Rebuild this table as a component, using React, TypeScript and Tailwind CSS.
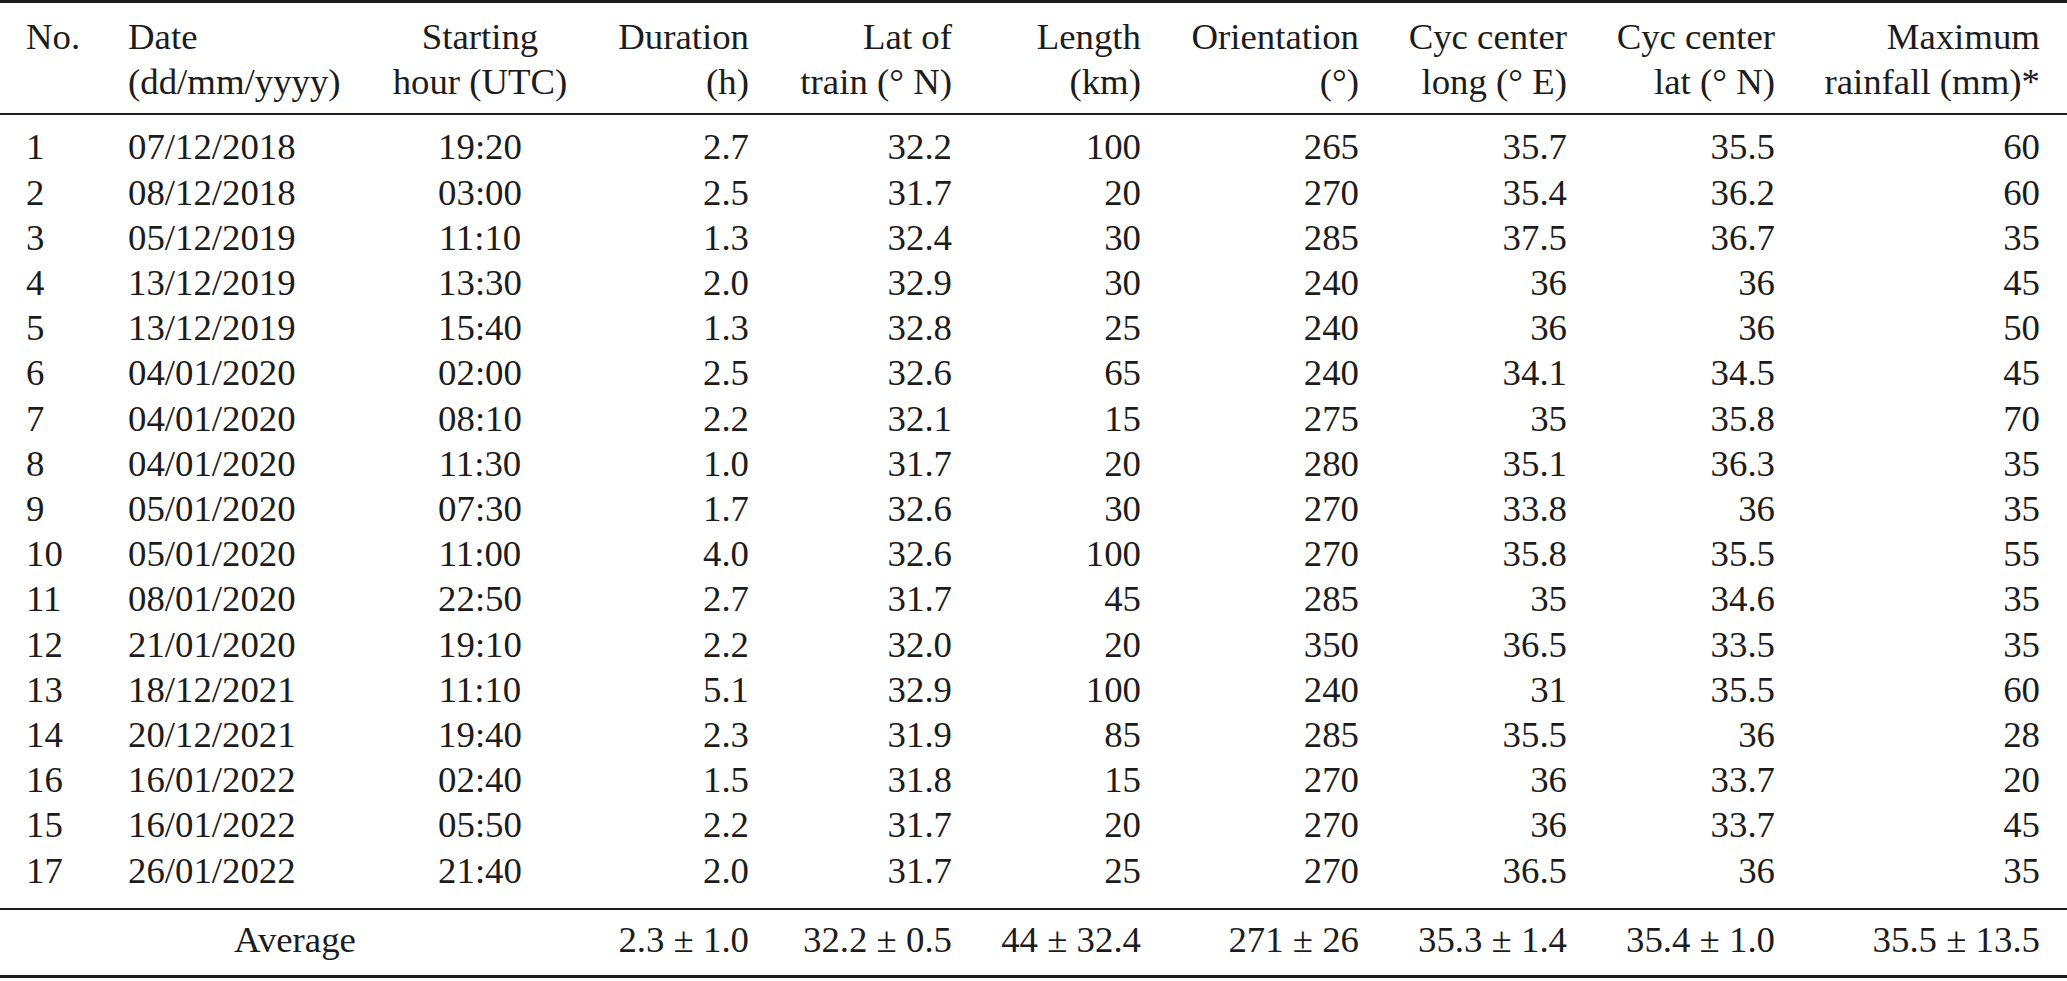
import React from "react";

const rows: string[][] = [
  ["1", "07/12/2018", "19:20", "2.7", "32.2", "100", "265", "35.7", "35.5", "60"],
  ["2", "08/12/2018", "03:00", "2.5", "31.7", "20", "270", "35.4", "36.2", "60"],
  ["3", "05/12/2019", "11:10", "1.3", "32.4", "30", "285", "37.5", "36.7", "35"],
  ["4", "13/12/2019", "13:30", "2.0", "32.9", "30", "240", "36", "36", "45"],
  ["5", "13/12/2019", "15:40", "1.3", "32.8", "25", "240", "36", "36", "50"],
  ["6", "04/01/2020", "02:00", "2.5", "32.6", "65", "240", "34.1", "34.5", "45"],
  ["7", "04/01/2020", "08:10", "2.2", "32.1", "15", "275", "35", "35.8", "70"],
  ["8", "04/01/2020", "11:30", "1.0", "31.7", "20", "280", "35.1", "36.3", "35"],
  ["9", "05/01/2020", "07:30", "1.7", "32.6", "30", "270", "33.8", "36", "35"],
  ["10", "05/01/2020", "11:00", "4.0", "32.6", "100", "270", "35.8", "35.5", "55"],
  ["11", "08/01/2020", "22:50", "2.7", "31.7", "45", "285", "35", "34.6", "35"],
  ["12", "21/01/2020", "19:10", "2.2", "32.0", "20", "350", "36.5", "33.5", "35"],
  ["13", "18/12/2021", "11:10", "5.1", "32.9", "100", "240", "31", "35.5", "60"],
  ["14", "20/12/2021", "19:40", "2.3", "31.9", "85", "285", "35.5", "36", "28"],
  ["16", "16/01/2022", "02:40", "1.5", "31.8", "15", "270", "36", "33.7", "20"],
  ["15", "16/01/2022", "05:50", "2.2", "31.7", "20", "270", "36", "33.7", "45"],
  ["17", "26/01/2022", "21:40", "2.0", "31.7", "25", "270", "36.5", "36", "35"],
];

const align = [
  "text-left",
  "text-left",
  "text-center",
  "text-right",
  "text-right",
  "text-right",
  "text-right",
  "text-right",
  "text-right",
  "text-right",
];

const header: [string, string][] = [
  ["No.", ""],
  ["Date", "(dd/mm/yyyy)"],
  ["Starting", "hour (UTC)"],
  ["Duration", "(h)"],
  ["Lat of", "train (° N)"],
  ["Length", "(km)"],
  ["Orientation", "(°)"],
  ["Cyc center", "long (° E)"],
  ["Cyc center", "lat (° N)"],
  ["Maximum", "rainfall (mm)*"],
];

const avg = ["2.3 ± 1.0", "32.2 ± 0.5", "44 ± 32.4", "271 ± 26", "35.3 ± 1.4", "35.4 ± 1.0", "35.5 ± 13.5"];

const gridCols =
  "grid grid-cols-[102px_252px_200px_169px_203px_189px_218px_208px_208px_265px] px-[26px]";

export default function App() {
  return (
    <div
      className="w-[2067px] h-[981px] bg-white text-[#1c1c1c] text-[36.8px] leading-[45.2px] overflow-hidden"
      style={{ fontFamily: '"Liberation Serif", "Times New Roman", serif' }}
    >
      <div className="h-[3px] bg-[#1c1c1c]" />
      <div className={`${gridCols} pt-[11px] pb-[9px]`}>
        {header.map((h, i) => (
          <div key={i} className={`${align[i]} whitespace-nowrap`}>
            <div>{h[0]}</div>
            <div>{h[1] || "\u00a0"}</div>
          </div>
        ))}
      </div>
      <div className="h-[2px] bg-[#1c1c1c]" />
      <div className="pt-[9px] pb-[15px]">
        {rows.map((r, ri) => (
          <div key={ri} className={gridCols}>
            {r.map((c, ci) => (
              <div key={ci} className={`${align[ci]} whitespace-nowrap`}>
                {c}
              </div>
            ))}
          </div>
        ))}
      </div>
      <div className="h-[2px] bg-[#1c1c1c]" />
      <div className="flex px-[26px] pt-[7px] pb-[13px]">
        <div className="w-[554px] pr-[16px] text-center">Average</div>
        {avg.map((a, i) => (
          <div
            key={i}
            className={`text-right whitespace-nowrap ${
              ["w-[169px]", "w-[203px]", "w-[189px]", "w-[218px]", "w-[208px]", "w-[208px]", "w-[265px]"][i]
            }`}
          >
            {a}
          </div>
        ))}
      </div>
      <div className="h-[3px] bg-[#1c1c1c]" />
    </div>
  );
}
